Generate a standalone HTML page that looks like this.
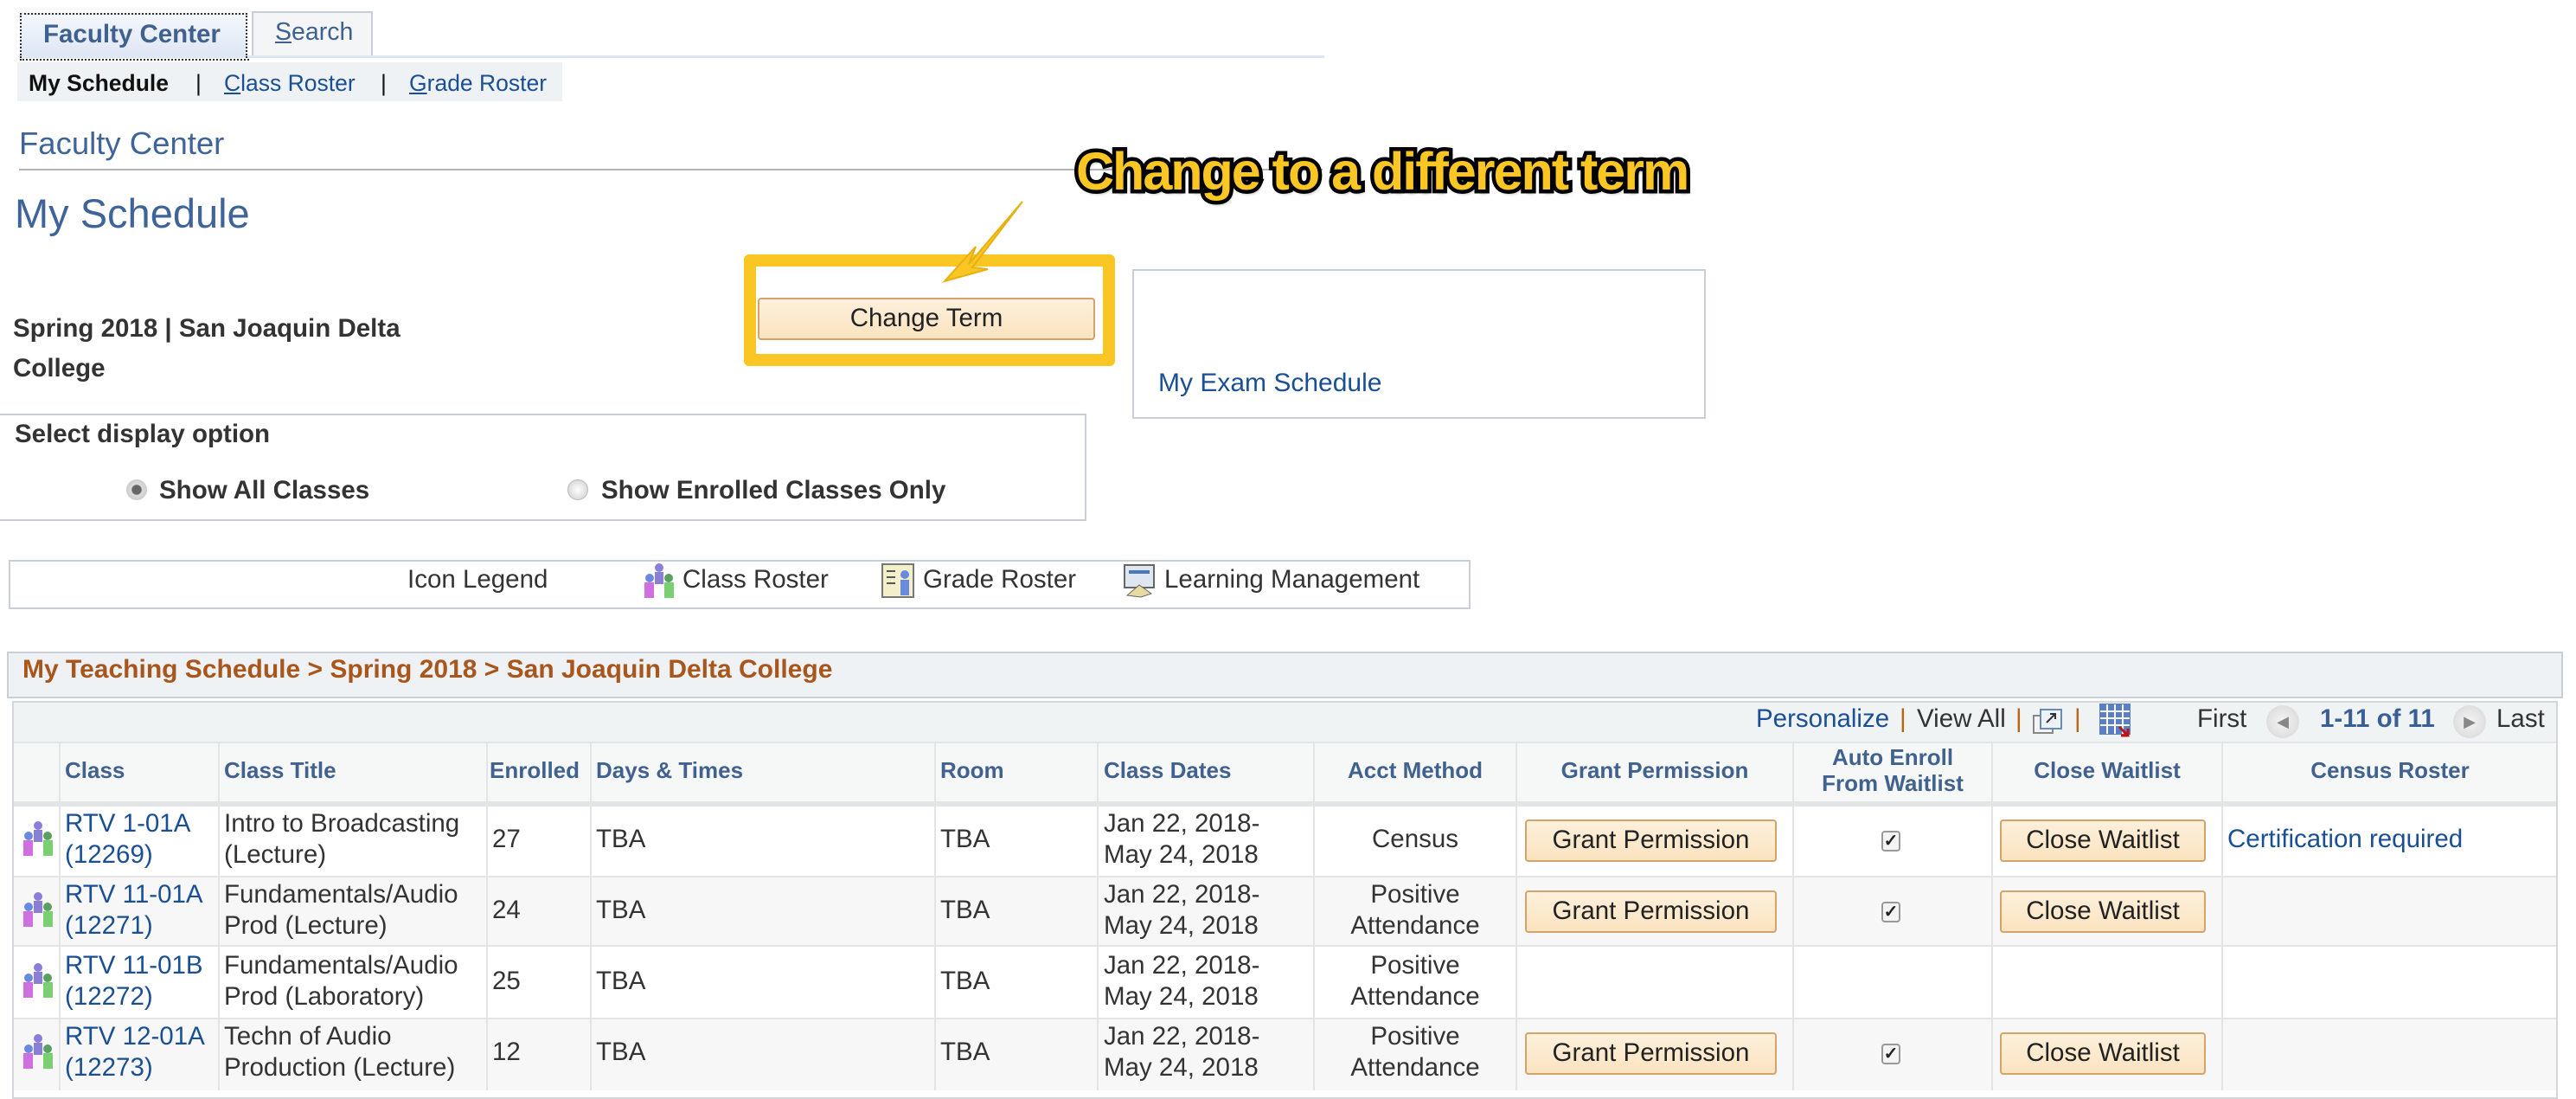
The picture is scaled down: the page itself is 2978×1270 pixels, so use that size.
<!DOCTYPE html>
<html><head><meta charset="utf-8"><style>
*{margin:0;padding:0;box-sizing:border-box}
body{width:2978px;height:1260px;background:#fff;font-family:"Liberation Sans",Arial,sans-serif;position:relative;overflow:hidden;color:#333}
.a{position:absolute;white-space:nowrap}
a,.lk{color:#1a4f95;text-decoration:none}
.btn{position:absolute;background:linear-gradient(#fdf0dc,#fbe3bf);border:2px solid #d4a36a;border-radius:4px;font-size:29.5px;color:#222;text-align:center}
.hd{position:absolute;font-weight:bold;color:#41618f;font-size:26px;text-align:center;line-height:30px}
.cell{position:absolute;font-size:29.5px;line-height:36px;color:#333}
.vl{position:absolute;width:2px;background:#e4e4e4}
.cb{position:absolute;width:22px;height:24px;border:2px solid #999;border-radius:4px;background:#f4f4f4;font-size:20px;line-height:20px;text-align:center;color:#222;font-weight:bold}
</style></head><body>

<div class="a" style="left:23px;top:15px;width:263px;height:52px;background:linear-gradient(#f4f7fc,#dde6f4);border:2px dotted #333;border-bottom:none"></div>
<div class="a" style="left:50px;top:23px;font-size:29.5px;font-weight:bold;color:#40608e">Faculty Center</div>
<div class="a" style="left:291px;top:13px;width:140px;height:54px;background:#f4f5f7;border:2px solid #c7ced9;border-bottom:none"></div>
<div class="a" style="left:318px;top:21px;font-size:28.5px;color:#40608e"><u>S</u>earch</div>
<div class="a" style="left:286px;top:64px;width:1245px;height:3px;background:#dde5f0"></div>
<div class="a" style="left:23px;top:67px;width:265px;height:3px;border-bottom:2px dotted #333"></div>
<div class="a" style="left:20px;top:72px;width:630px;height:45px;background:#eef2f4"></div>
<div class="a" style="left:33px;top:81px;font-size:26.5px;font-weight:bold;color:#111">My Schedule</div>
<div class="a" style="left:226px;top:81px;font-size:26.5px;color:#111">|</div>
<div class="a lk" style="left:259px;top:81px;font-size:26.5px"><u>C</u>lass Roster</div>
<div class="a" style="left:440px;top:81px;font-size:26.5px;color:#111">|</div>
<div class="a lk" style="left:473px;top:81px;font-size:26.5px"><u>G</u>rade Roster</div>

<div class="a" style="left:22px;top:145px;font-size:36.5px;color:#3e649a">Faculty Center</div>
<div class="a" style="left:22px;top:195px;width:1507px;height:2px;background:#b5b5b5"></div>
<div class="a" style="left:17px;top:219px;font-size:47px;color:#3e649a">My Schedule</div>

<div class="a" style="left:15px;top:357px;font-size:29.5px;font-weight:bold;color:#333;line-height:46px">Spring 2018 | San Joaquin Delta<br>College</div>

<div class="a" style="left:860px;top:294px;width:429px;height:129px;border:14px solid #f9c623;border-radius:6px"></div>
<div class="btn" style="left:876px;top:344px;width:390px;height:49px;line-height:44px">Change Term</div>

<div class="a" style="left:1309px;top:311px;width:663px;height:173px;border:2px solid #c9ced8"></div>
<div class="a lk" style="left:1339px;top:426px;font-size:30px">My Exam Schedule</div>

<div class="a" style="left:1244px;top:163px;font-size:61px;font-weight:bold;letter-spacing:-2px;color:#f9c623;-webkit-text-stroke:9px #000;paint-order:stroke fill;text-shadow:2px 4px 4px rgba(0,0,0,.4)">Change to a different term</div>
<svg class="a" style="left:1080px;top:225px" width="120" height="110"><path d="M102 8 L40 80 L48 60 L12 100 L62 86 L44 84 Z" fill="#f9c623" stroke="#e8b010" stroke-width="2"/></svg>

<div class="a" style="left:-2px;top:478px;width:1258px;height:124px;border:2px solid #c9ced8"></div>
<div class="a" style="left:17px;top:485px;font-size:29.5px;font-weight:bold;color:#333">Select display option</div>
<div class="a" style="left:146px;top:554px;width:24px;height:24px;border-radius:50%;background:radial-gradient(#666 30%,#ddd 38%,#bbb 100%)"></div>
<div class="a" style="left:184px;top:550px;font-size:29.5px;font-weight:bold">Show All Classes</div>
<div class="a" style="left:656px;top:554px;width:24px;height:24px;border-radius:50%;background:radial-gradient(#fff,#ccc);border:1px solid #bbb"></div>
<div class="a" style="left:695px;top:550px;font-size:29.5px;font-weight:bold">Show Enrolled Classes Only</div>

<div class="a" style="left:10px;top:647px;width:1690px;height:57px;border:2px solid #c9ced8"></div>
<div class="a" style="left:471px;top:653px;font-size:29.5px">Icon Legend</div>
<svg class="a" style="left:740px;top:650px" width="44" height="42"><circle cx="22" cy="6" r="5" fill="#8a7fd8"/><rect x="17" y="11" width="10" height="14" fill="#8a7fd8"/><circle cx="11" cy="18" r="5" fill="#6a8ae0"/><rect x="5" y="23" width="11" height="18" fill="#d070e0"/><circle cx="33" cy="18" r="5" fill="#5aa060"/><rect x="28" y="23" width="11" height="18" fill="#7ad070"/></svg>
<div class="a" style="left:789px;top:653px;font-size:29.5px">Class Roster</div>
<svg class="a" style="left:1018px;top:650px" width="42" height="42"><rect x="2" y="2" width="36" height="38" fill="#f3efc8" stroke="#777" stroke-width="2"/><path d="M7 10h10M7 17h10M7 24h10" stroke="#555" stroke-width="2"/><circle cx="28" cy="14" r="5" fill="#6a8ae0"/><rect x="23" y="20" width="10" height="18" fill="#6a8ae0"/></svg>
<div class="a" style="left:1067px;top:653px;font-size:29.5px">Grade Roster</div>
<svg class="a" style="left:1297px;top:650px" width="42" height="42"><rect x="3" y="3" width="34" height="26" fill="#dfe6f0" stroke="#666" stroke-width="2"/><rect x="8" y="9" width="24" height="4" fill="#4a78c0"/><path d="M6 38 L20 26 L34 36 L22 40Z" fill="#e8d9a0" stroke="#666"/></svg>
<div class="a" style="left:1346px;top:653px;font-size:29.5px">Learning Management</div>

<div class="a" style="left:8px;top:753px;width:2955px;height:54px;background:#eef2f4;border:2px solid #c9ced8"></div>
<div class="a" style="left:26px;top:757px;font-size:30px;font-weight:bold;color:#a8561c">My Teaching Schedule &gt; Spring 2018 &gt; San Joaquin Delta College</div>

<div class="a" style="left:14px;top:810px;width:2943px;height:460px;border:2px solid #d3d7dc;background:#fff"></div>
<div class="a" style="left:16px;top:812px;width:2939px;height:45px;background:#f0f3f4"></div>
<div class="a" style="left:16px;top:857px;width:2939px;height:69px;background:#f6f7f7;border-top:2px solid #e2e4e6"></div>
<div class="a" style="left:16px;top:926px;width:2939px;height:6px;background:#e3e5e7"></div>
<div class="a" style="left:16px;top:1012px;width:2939px;height:82px;background:#f7f7f7;border-top:2px solid #e4e4e4;border-bottom:2px solid #e4e4e4"></div>
<div class="a" style="left:16px;top:1176px;width:2939px;height:84px;background:#f7f7f7;border-top:2px solid #e4e4e4"></div>

<div class="a lk" style="left:2030px;top:814px;font-size:29.5px">Personalize</div>
<div class="a" style="left:2196px;top:814px;font-size:29.5px;color:#c06010">|</div>
<div class="a" style="left:2216px;top:814px;font-size:29.5px">View All</div>
<div class="a" style="left:2330px;top:814px;font-size:29.5px;color:#c06010">|</div>
<svg class="a" style="left:2349px;top:817px" width="38" height="34"><rect x="2" y="10" width="22" height="20" fill="#f4f4f4" stroke="#888" stroke-width="2"/><rect x="10" y="3" width="24" height="22" fill="#eef3fa" stroke="#6a8ab8" stroke-width="2"/><path d="M17 18 L27 8 M21 8h6v6" stroke="#333" stroke-width="2" fill="none"/></svg>
<div class="a" style="left:2398px;top:814px;font-size:29.5px;color:#c06010">|</div>
<svg class="a" style="left:2426px;top:812px" width="40" height="40"><rect x="1" y="1" width="36" height="36" fill="#5b7fc7"/><path d="M2 10h34M2 18h34M2 26h34M10 2v34M19 2v34M28 2v34" stroke="#fff" stroke-width="2"/><path d="M24 28l10 10M34 30v8h-8" stroke="#c01010" stroke-width="3" fill="none"/></svg>
<div class="a" style="left:2540px;top:814px;font-size:29.5px">First</div>
<div class="a" style="left:2620px;top:815px;width:38px;height:38px;border-radius:50%;background:radial-gradient(#f5f5f5,#d4d4d4);color:#888;font-size:18px;line-height:38px;text-align:center">◀</div>
<div class="a lk" style="left:2682px;top:814px;font-size:29.5px;font-weight:bold;color:#3a5f95">1-11 of 11</div>
<div class="a" style="left:2836px;top:815px;width:38px;height:38px;border-radius:50%;background:radial-gradient(#f5f5f5,#d4d4d4);color:#888;font-size:18px;line-height:38px;text-align:center">▶</div>
<div class="a" style="left:2886px;top:814px;font-size:29.5px">Last</div>

<div class="vl" style="left:68px;top:857px;height:403px"></div>
<div class="vl" style="left:252px;top:857px;height:403px"></div>
<div class="vl" style="left:562px;top:857px;height:403px"></div>
<div class="vl" style="left:682px;top:857px;height:403px"></div>
<div class="vl" style="left:1080px;top:857px;height:403px"></div>
<div class="vl" style="left:1268px;top:857px;height:403px"></div>
<div class="vl" style="left:1518px;top:857px;height:403px"></div>
<div class="vl" style="left:1752px;top:857px;height:403px"></div>
<div class="vl" style="left:2072px;top:857px;height:403px"></div>
<div class="vl" style="left:2302px;top:857px;height:403px"></div>
<div class="vl" style="left:2568px;top:857px;height:403px"></div>

<div class="hd" style="left:75px;top:875px">Class</div>
<div class="hd" style="left:259px;top:875px">Class Title</div>
<div class="hd" style="left:566px;top:875px">Enrolled</div>
<div class="hd" style="left:689px;top:875px">Days &amp; Times</div>
<div class="hd" style="left:1087px;top:875px">Room</div>
<div class="hd" style="left:1276px;top:875px">Class Dates</div>
<div class="hd" style="left:1520px;top:875px;width:232px">Acct Method</div>
<div class="hd" style="left:1754px;top:875px;width:318px">Grant Permission</div>
<div class="hd" style="left:2074px;top:860px;width:228px">Auto Enroll<br>From Waitlist</div>
<div class="hd" style="left:2304px;top:875px;width:264px">Close Waitlist</div>
<div class="hd" style="left:2570px;top:875px;width:386px">Census Roster</div>

<div id="rows"></div>
<script>
var rows=[["RTV 1-01A","12269","Intro to Broadcasting","(Lecture)","27","Census",1],
["RTV 11-01A","12271","Fundamentals/Audio","Prod (Lecture)","24","Positive<br>Attendance",1],
["RTV 11-01B","12272","Fundamentals/Audio","Prod (Laboratory)","25","Positive<br>Attendance",0],
["RTV 12-01A","12273","Techn of Audio","Production (Lecture)","12","Positive<br>Attendance",1]];
var h="";
rows.forEach(function(r,i){var t=931+i*82;
h+='<svg class="a" style="left:22px;top:'+(t+17)+'px" width="44" height="44"><circle cx="22" cy="6" r="5" fill="#8a7fd8"/><rect x="17" y="11" width="10" height="14" fill="#8a7fd8"/><circle cx="11" cy="18" r="5" fill="#6a8ae0"/><rect x="5" y="23" width="11" height="18" fill="#d070e0"/><circle cx="33" cy="18" r="5" fill="#5aa060"/><rect x="28" y="23" width="11" height="18" fill="#7ad070"/></svg>';
h+='<div class="cell lk" style="left:75px;top:'+(t+3)+'px;color:#1a4f95">'+r[0]+'<br>('+r[1]+')</div>';
h+='<div class="cell" style="left:259px;top:'+(t+3)+'px">'+r[2]+'<br>'+r[3]+'</div>';
h+='<div class="cell" style="left:569px;top:'+(t+21)+'px">'+r[4]+'</div>';
h+='<div class="cell" style="left:689px;top:'+(t+21)+'px">TBA</div>';
h+='<div class="cell" style="left:1087px;top:'+(t+21)+'px">TBA</div>';
h+='<div class="cell" style="left:1276px;top:'+(t+3)+'px">Jan 22, 2018-<br>May 24, 2018</div>';
h+='<div class="cell" style="left:1520px;width:232px;text-align:center;top:'+(r[5].length>10?t+3:t+21)+'px">'+r[5]+'</div>';
if(r[6]){h+='<div class="btn" style="left:1763px;top:'+(t+16)+'px;width:291px;height:49px;line-height:44px">Grant Permission</div>';
h+='<div class="cb" style="left:2175px;top:'+(t+29)+'px">✓</div>';
h+='<div class="btn" style="left:2312px;top:'+(t+16)+'px;width:238px;height:49px;line-height:44px">Close Waitlist</div>';}
});
h+='<div class="cell" style="left:2575px;top:952px;color:#1a4f95">Certification required</div>';
document.getElementById("rows").innerHTML=h;
</script>
</body></html>
